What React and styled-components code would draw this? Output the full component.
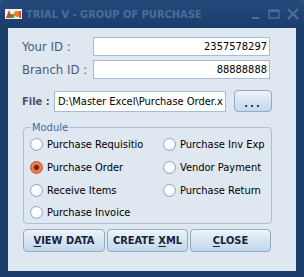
import React from "react";
import styled, { createGlobalStyle } from "styled-components";

const GlobalStyle = createGlobalStyle`
  html, body {
    margin: 0;
    padding: 0;
    background: #2f527f;
  }
  body {
    font-family: "DejaVu Sans Condensed", "DejaVu Sans", sans-serif;
    font-stretch: condensed;
  }
`;

const Window = styled.div`
  width: 304px;
  height: 277px;
  box-sizing: border-box;
  display: flex;
  flex-direction: column;
  background: linear-gradient(#24497b, #1b3c6b 30px, #1b3c6b);
  border-radius: 7px 7px 0 0;
  padding: 0 8px 6px 8px;
`;

const TitleBar = styled.div`
  height: 28px;
  flex: none;
  display: flex;
  align-items: center;
  margin-left: -3px;
  gap: 4px;
`;

const TitleText = styled.div`
  flex: 1;
  font-size: 11px;
  font-weight: bold;
  color: #4a6d98;
  white-space: nowrap;
  padding-top: 1px;
`;

const Caption = styled.div`
  display: flex;
  align-items: center;
  gap: 6px;
  margin-right: -4px;
`;

const Client = styled.div`
  flex: 1;
  background: #dfe7f0;
  padding: 9px 24px 0 14px;
  display: flex;
  flex-direction: column;
`;

const IdGrid = styled.div`
  display: grid;
  grid-template-columns: 71px 177px;
  row-gap: 4px;
  align-items: center;
`;

const Label = styled.label`
  font-size: 13px;
  color: #4a5a7a;
`;

const Field = styled.input`
  box-sizing: border-box;
  height: ${(p) => p.$h || 19}px;
  width: ${(p) => p.$w || 177}px;
  border: 1px solid #a4bdd6;
  background: #ffffff;
  font-family: inherit;
  font-stretch: condensed;
  font-size: 11px;
  color: #000;
  padding: 0 2px 0 3px;
  text-align: ${(p) => (p.$right ? "right" : "left")};
  outline: none;
  margin: 0;
`;

const FileRow = styled.div`
  display: flex;
  align-items: center;
  margin-top: 11px;
`;

const FileLabel = styled.label`
  width: 32px;
  font-size: 11px;
  font-weight: bold;
  color: #44546e;
`;

const Btn = styled.button`
  box-sizing: border-box;
  width: ${(p) => p.$w}px;
  height: ${(p) => p.$h || 23}px;
  margin: 0;
  padding: 0;
  border: 1px solid #8eabc9;
  border-radius: 4px;
  background: linear-gradient(#eef4fa, #d9e6f2 45%, #c3d7ea);
  font-family: inherit;
  font-stretch: condensed;
  font-size: 11px;
  font-weight: bold;
  color: #16243e;
  display: flex;
  align-items: center;
  justify-content: center;
  letter-spacing: ${(p) => p.$spacing || 0}px;
  u {
    text-decoration-thickness: 1px;
    text-underline-offset: 2px;
  }
`;

const BrowseBtn = styled(Btn)`
  margin-left: 8px;
  padding-top: 4px;
`;

const Group = styled.fieldset`
  margin: 10px 0 0 1px;
  padding: 0 0 0 6px;
  box-sizing: border-box;
  border: 1px solid #a9c0d8;
  border-radius: 4px;
  display: grid;
  grid-template-columns: 133px 1fr;
  grid-template-rows: 23px 23px 22px 22px;
  grid-auto-flow: column;
  min-width: 0;
`;

const Legend = styled.legend`
  font-size: 11px;
  color: #3a6aa6;
  padding: 0 1px;
  margin-left: 1px;
  line-height: 11px;
`;

const Option = styled.label`
  display: flex;
  align-items: center;
  gap: 4px;
  font-size: 11px;
  color: #000;
  white-space: nowrap;
  overflow: hidden;
  width: ${(p) => p.$w || 140}px;
`;

const Dot = styled.span`
  flex: none;
  width: 13px;
  height: 13px;
  box-sizing: border-box;
  border-radius: 50%;
  border: 1px solid ${(p) => (p.$on ? "#c8502a" : "#8ea8c4")};
  background: ${(p) =>
    p.$on
      ? "radial-gradient(circle, #6a2410 0 2px, #c85430 2.5px, #f08a5c 4px, #ec6a3c 6px)"
      : "radial-gradient(circle at 50% 40%, #ffffff 40%, #eef3f8 70%, #d6e2ee)"};
`;

const ButtonRow = styled.div`
  display: flex;
  gap: 2px;
  margin: 5px 0 0 1px;
`;

const Radio = ({ label, on, w }) => (
  <Option $w={w}>
    <Dot $on={on} />
    {label}
  </Option>
);

const AppIcon = () => (
  <svg width="17" height="10" viewBox="0 0 17 10">
    <rect width="17" height="10" fill="#f4f0ea" />
    <path d="M1 9 L4 1 L7 9 Z" fill="#e23a2a" />
    <path d="M5 5 h4 v4 h-4 z" fill="#3aa040" />
    <circle cx="12" cy="5" r="3" fill="#f07a2a" />
    <path d="M14 2 l2 0 0 7 -2 0z" fill="#e84a3a" />
  </svg>
);

const CaptionIcons = () => (
  <Caption>
    <svg width="12" height="12" viewBox="0 0 12 12">
      <rect x="2" y="9" width="7" height="2" fill="#4c6e98" />
    </svg>
    <svg width="12" height="12" viewBox="0 0 12 12">
      <rect x="1" y="2" width="10" height="8" fill="none" stroke="#4c6e98" strokeWidth="1.4" />
      <rect x="1" y="2" width="10" height="2" fill="#4c6e98" />
    </svg>
    <svg width="14" height="12" viewBox="0 0 14 12">
      <path d="M2 1 L12 11 M12 1 L2 11" stroke="#4c6e98" strokeWidth="2.4" />
    </svg>
  </Caption>
);

const App = () => {
  return (
    <>
      <GlobalStyle />
      <Window>
        <TitleBar>
          <AppIcon />
          <TitleText>TRIAL V - GROUP OF PURCHASE</TitleText>
          <CaptionIcons />
        </TitleBar>
        <Client>
          <IdGrid>
            <Label>Your ID :</Label>
            <Field $right defaultValue="2357578297" />
            <Label>Branch ID :</Label>
            <Field $right defaultValue="88888888" />
          </IdGrid>
          <FileRow>
            <FileLabel>File :</FileLabel>
            <Field $w={172} $h={21} defaultValue="D:\Master Excel\Purchase Order.xls" />
            <BrowseBtn $w={38} $h={22} $spacing={2}>
              ...
            </BrowseBtn>
          </FileRow>
          <Group>
            <Legend>Module</Legend>
            <Radio label="Purchase Requisition" w={113} />
            <Radio label="Purchase Order" on />
            <Radio label="Receive Items" />
            <Radio label="Purchase Invoice" />
            <Radio label="Purchase Inv Exp" w={105} />
            <Radio label="Vendor Payment" w={105} />
            <Radio label="Purchase Return" w={105} />
          </Group>
          <ButtonRow>
            <Btn $w={82}>
              <u>V</u>IEW DATA
            </Btn>
            <Btn $w={81}>
              CREATE&nbsp;<u>X</u>ML
            </Btn>
            <Btn $w={81}>
              <u>C</u>LOSE
            </Btn>
          </ButtonRow>
        </Client>
      </Window>
    </>
  );
};

export default App;
